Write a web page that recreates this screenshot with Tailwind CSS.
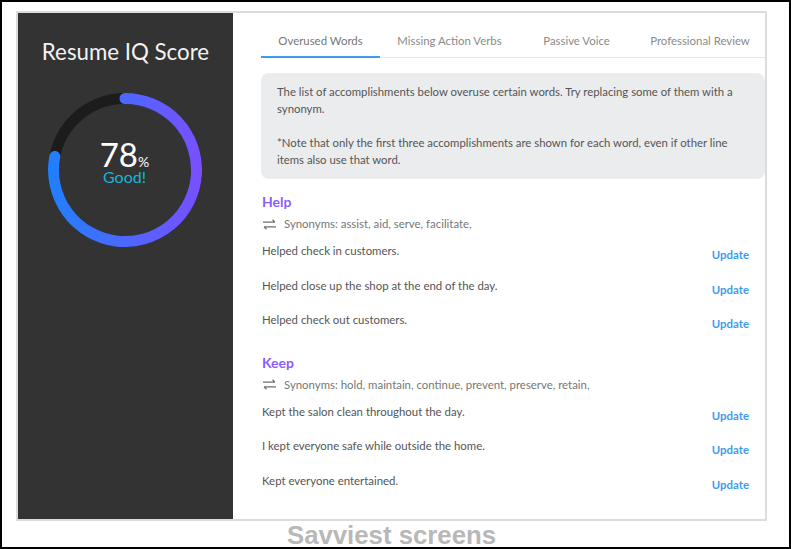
<!DOCTYPE html>
<html lang="en">
<head>
    <meta charset="UTF-8">
    <title>Resume IQ Score</title>
    <script src="https://cdn.jsdelivr.net/npm/@tailwindcss/browser@4"></script>
</head>
<body class="bg-white">
    <div class="w-[791px] h-[549px] border-2 border-black overflow-hidden pt-[9px] pl-[14px] font-['Lato',sans-serif]">
        <!-- Card -->
        <div class="w-[751px] h-[510px] border-2 border-[#dcdcdc] flex">
            <!-- Score sidebar -->
            <aside class="w-[215px] shrink-0 bg-[#333333] flex flex-col items-center">
                <h2 class="mt-[24px] h-[30px] leading-[30px] text-[22.3px] text-[#f2f2f2] whitespace-nowrap">Resume IQ Score</h2>
                <div class="relative mt-[26px] -ml-[2px] w-[154px] h-[154px]">
                    <svg width="154" height="154" viewBox="0 0 154 154" fill="none">
                        <defs>
                            <linearGradient id="ring" gradientUnits="userSpaceOnUse" x1="0" y1="0" x2="154" y2="0">
                                <stop offset="0" stop-color="#1f80ff"/>
                                <stop offset="1" stop-color="#7a4fff"/>
                            </linearGradient>
                        </defs>
                        <circle cx="77" cy="77" r="71.5" stroke="#1c1c1c" stroke-width="11"/>
                        <path d="M77 5.5A71.5 71.5 0 1 1 6.8 63.5" stroke="url(#ring)" stroke-width="11" stroke-linecap="round"/>
                    </svg>
                    <div class="absolute inset-0 flex flex-col items-center pt-[48px]">
                        <div class="h-[27px] leading-[27px] text-white text-[33px] whitespace-nowrap">78<span class="text-[14px]">%</span></div>
                        <div class="h-[17px] leading-[17px] text-[#17b3dc] text-[16px]">Good!</div>
                    </div>
                </div>
            </aside>

            <!-- Main -->
            <main class="flex-1 pl-[28px] text-[11.4px] text-[#555555]">
                <!-- Tabs -->
                <nav class="flex h-[45px] mr-[-1px] border-b border-[#e6e6e6] text-[#8a8a8a] text-center text-[11.4px]">
                    <a class="w-[119px] pt-[19px] border-b-2 border-[#3d9bf2] h-[45px] text-[#777777]">Overused Words</a>
                    <a class="w-[139px] pt-[19px]">Missing Action Verbs</a>
                    <a class="w-[115px] pt-[19px]">Passive Voice</a>
                    <a class="w-[132px] pt-[19px]">Professional Review</a>
                </nav>

                <!-- Note -->
                <div class="mt-[15px] h-[106px] rounded-lg bg-[#ebecee] pl-[16px] pr-[2px] pt-[10px] text-[11.35px] leading-[17px]">
                    <p>The list of accomplishments below overuse certain words. Try replacing some of them with a<br>synonym.</p>
                    <p class="mt-[17px]">*Note that only the first three accomplishments are shown for each word, even if other line<br>items also use that word.</p>
                </div>

                <!-- Help -->
                <section class="mt-[14px] pl-[1px]">
                    <h3 class="h-[18px] leading-[18px] text-[14px] font-bold text-[#8b5cff]">Help</h3>
                    <div class="mt-[5px] h-[16px] flex items-center text-[#777777]">
                        <svg class="ml-[1px] mr-[8px]" width="13" height="11" viewBox="0 0 13 11" fill="none" stroke="#6f6f6f" stroke-width="1.2">
                            <path d="M0 3.2H12M9.5 .8L12 3.2"/><path d="M13 7.8H1M3.5 10.2L1 7.8"/>
                        </svg>
                        <span>Synonyms: assist, aid, serve, facilitate,</span>
                    </div>
                    <ul class="mt-[10px]">
                        <li class="flex justify-between h-[34.5px] pr-[16px]"><span class="leading-[17px]">Helped check in customers.</span><span class="mt-[4px] leading-[17px] font-bold text-[#3d9bf2]">Update</span></li>
                        <li class="flex justify-between h-[34.5px] pr-[16px]"><span class="leading-[17px]">Helped close up the shop at the end of the day.</span><span class="mt-[4px] leading-[17px] font-bold text-[#3d9bf2]">Update</span></li>
                        <li class="flex justify-between h-[34.5px] pr-[16px]"><span class="leading-[17px]">Helped check out customers.</span><span class="mt-[4px] leading-[17px] font-bold text-[#3d9bf2]">Update</span></li>
                    </ul>
                </section>

                <!-- Keep -->
                <section class="mt-[8px] pl-[1px]">
                    <h3 class="h-[18px] leading-[18px] text-[14px] font-bold text-[#8b5cff]">Keep</h3>
                    <div class="mt-[5px] h-[16px] flex items-center text-[#777777]">
                        <svg class="ml-[1px] mr-[8px]" width="13" height="11" viewBox="0 0 13 11" fill="none" stroke="#6f6f6f" stroke-width="1.2">
                            <path d="M0 3.2H12M9.5 .8L12 3.2"/><path d="M13 7.8H1M3.5 10.2L1 7.8"/>
                        </svg>
                        <span>Synonyms: hold, maintain, continue, prevent, preserve, retain,</span>
                    </div>
                    <ul class="mt-[10px]">
                        <li class="flex justify-between h-[34.5px] pr-[16px]"><span class="leading-[17px]">Kept the salon clean throughout the day.</span><span class="mt-[4px] leading-[17px] font-bold text-[#3d9bf2]">Update</span></li>
                        <li class="flex justify-between h-[34.5px] pr-[16px]"><span class="leading-[17px]">I kept everyone safe while outside the home.</span><span class="mt-[4px] leading-[17px] font-bold text-[#3d9bf2]">Update</span></li>
                        <li class="flex justify-between h-[34.5px] pr-[16px]"><span class="leading-[17px]">Kept everyone entertained.</span><span class="mt-[4px] leading-[17px] font-bold text-[#3d9bf2]">Update</span></li>
                    </ul>
                </section>
            </main>
        </div>
        <div class="w-[751px] h-[26px] pt-[3px] leading-[23px] text-center font-['Liberation_Sans',sans-serif] font-bold text-[25.75px] text-[#b8b8b8]">Savviest screens</div>
    </div>
</body>
</html>
